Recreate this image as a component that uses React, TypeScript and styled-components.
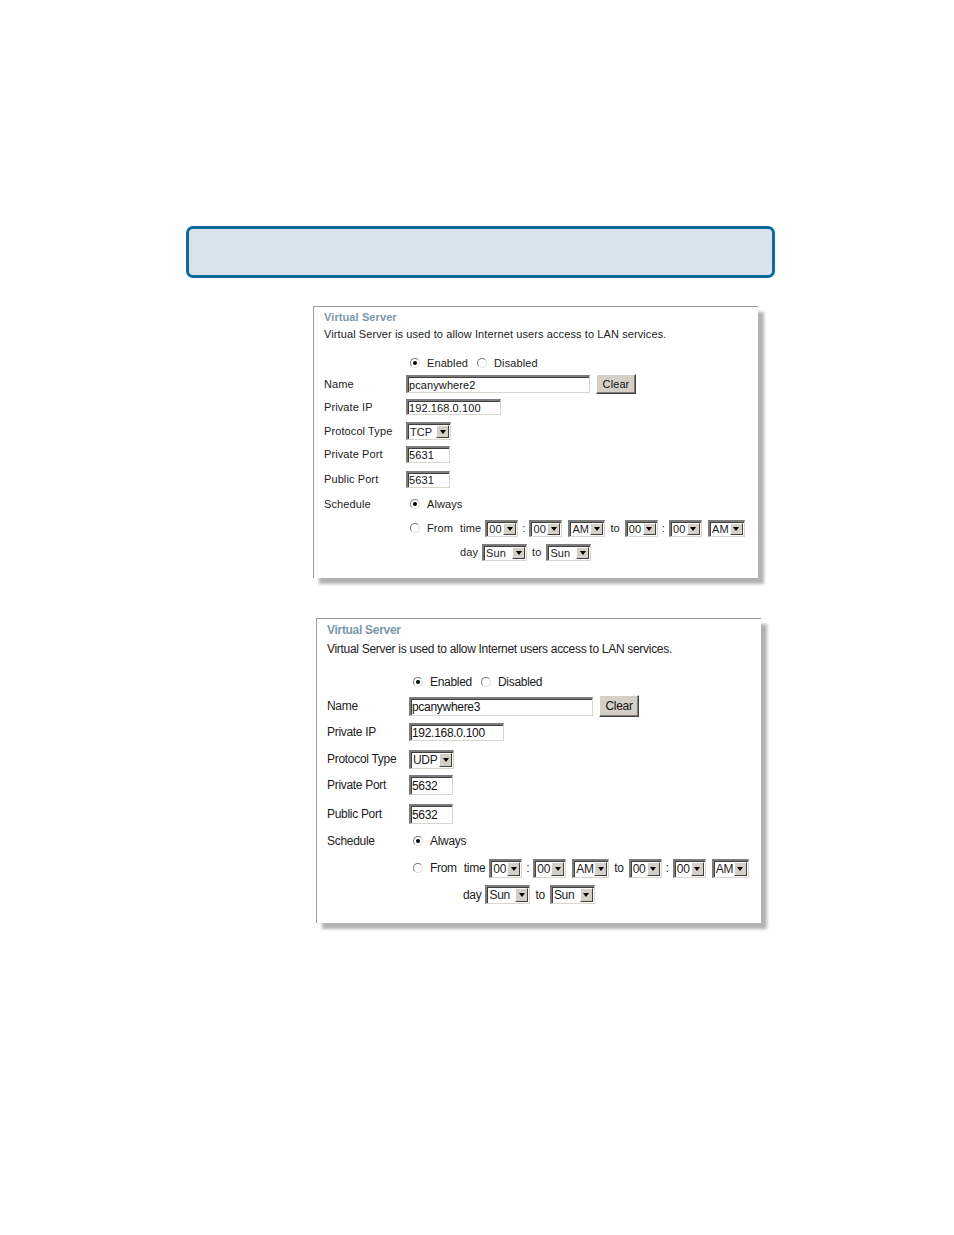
import React from "react";
import styled, { createGlobalStyle } from "styled-components";

const GlobalStyle = createGlobalStyle`
  html, body {
    margin: 0;
    padding: 0;
    background: #ffffff;
  }
  body {
    font-family: "Liberation Sans", Arial, sans-serif;
    color: #1c1c1c;
  }
`;

type Sizes = {
  font: number;
  spacing: number;
  field: number;
  name: number;
  ip: number;
  port: number;
  btn: number;
  rows: {
    title: number;
    desc: number;
    radioGap: number;
    radio: number;
    name: number;
    ip: number;
    proto: number;
    priv: number;
    pub: number;
    sched: number;
    from: number;
    day: number;
    bottom: number;
  };
};

const small: Sizes = {
  font: 11,
  spacing: 0.1,
  field: 17,
  name: 18,
  ip: 16,
  port: 17,
  btn: 20,
  rows: {
    title: 19,
    desc: 16,
    radioGap: 10,
    radio: 22,
    name: 20,
    ip: 26,
    proto: 22,
    priv: 24,
    pub: 26,
    sched: 24,
    from: 24,
    day: 24,
    bottom: 14,
  },
};

const tall: Sizes = {
  font: 12,
  spacing: -0.3,
  field: 19,
  name: 19,
  ip: 18,
  port: 20,
  btn: 22,
  rows: {
    title: 21,
    desc: 17,
    radioGap: 14,
    radio: 22,
    name: 26,
    ip: 26,
    proto: 28,
    priv: 24,
    pub: 34,
    sched: 20,
    from: 34,
    day: 18,
    bottom: 20,
  },
};

const Page = styled.div`
  width: 954px;
  min-height: 1235px;
  padding-top: 226px;
  box-sizing: border-box;
  display: flex;
  flex-direction: column;
`;

const Banner = styled.div`
  margin-left: 186px;
  width: 589px;
  height: 52px;
  box-sizing: border-box;
  border: 3px solid #0b6a9e;
  border-radius: 7px;
  background: #d9e3ee;
`;

const Panel = styled.div<{ $ml: number; $mt: number; $font: number; $ls: number }>`
  margin-left: ${(p) => p.$ml}px;
  margin-top: ${(p) => p.$mt}px;
  width: 445px;
  box-sizing: border-box;
  background: #ffffff;
  border-top: 1px solid #9c9c9c;
  border-left: 1px solid #9c9c9c;
  box-shadow: 6px 6px 3px rgba(0, 0, 0, 0.3);
  padding-left: 10px;
  display: flex;
  flex-direction: column;
  font-size: ${(p) => p.$font}px;
  letter-spacing: ${(p) => p.$ls}px;
`;

const Title = styled.div<{ $h: number }>`
  height: ${(p) => p.$h}px;
  display: flex;
  align-items: center;
  font-weight: bold;
  color: #7b99ab;
`;

const Desc = styled.div<{ $h: number }>`
  height: ${(p) => p.$h}px;
  display: flex;
  align-items: center;
  white-space: nowrap;
`;

const Row = styled.div<{ $h: number; $mt?: number }>`
  height: ${(p) => p.$h}px;
  margin-top: ${(p) => p.$mt ?? 0}px;
  display: grid;
  grid-template-columns: 82px 1fr;
  align-items: center;
`;

const Label = styled.span`
  white-space: nowrap;
`;

const Controls = styled.div<{ $indent?: number }>`
  display: flex;
  align-items: center;
  gap: 5px;
  padding-left: ${(p) => p.$indent ?? 0}px;
  white-space: nowrap;
`;

const TextBox = styled.input<{ $w: number; $h: number }>`
  width: ${(p) => p.$w}px;
  height: ${(p) => p.$h}px;
  box-sizing: border-box;
  margin: 0;
  padding: 0 1px;
  font: inherit;
  letter-spacing: inherit;
  color: #111;
  background: #fff;
  border-top: 2px solid #7c7c7c;
  border-left: 2px solid #7c7c7c;
  border-right: 1px solid #d8d5cd;
  border-bottom: 1px solid #d8d5cd;
  box-shadow: inset 1px 1px 0 #404040;
  outline: none;
`;

const Button = styled.button<{ $h: number }>`
  height: ${(p) => p.$h}px;
  width: 40px;
  margin: 0 0 0 1px;
  padding: 0;
  font: inherit;
  letter-spacing: inherit;
  color: #111;
  background: #d4d0c8;
  border-top: 1px solid #ffffff;
  border-left: 1px solid #ffffff;
  border-right: 1px solid #404040;
  border-bottom: 1px solid #404040;
  box-shadow: inset -1px -1px 0 #808080;
`;

const SelectBox = styled.div<{ $w: number; $h: number; $ml?: number }>`
  width: ${(p) => p.$w}px;
  height: ${(p) => p.$h}px;
  margin-left: ${(p) => p.$ml ?? 0}px;
  box-sizing: border-box;
  display: flex;
  align-items: stretch;
  background: #fff;
  border-top: 2px solid #7c7c7c;
  border-left: 2px solid #7c7c7c;
  border-right: 1px solid #d8d5cd;
  border-bottom: 1px solid #d8d5cd;
  box-shadow: inset 1px 1px 0 #404040;
`;

const SelectText = styled.span`
  flex: 1;
  display: flex;
  align-items: center;
  padding-left: 2px;
  overflow: hidden;
`;

const DropButton = styled.span`
  width: 13px;
  margin: 1px 1px 1px 0;
  box-sizing: border-box;
  display: flex;
  align-items: center;
  justify-content: center;
  background: #d4d0c8;
  border-top: 1px solid #ffffff;
  border-left: 1px solid #ffffff;
  border-right: 1px solid #404040;
  border-bottom: 1px solid #404040;
`;

const Arrow = styled.span`
  width: 0;
  height: 0;
  border-left: 3.5px solid transparent;
  border-right: 3.5px solid transparent;
  border-top: 4px solid #000;
`;

const RadioDot = styled.span<{ $on: boolean }>`
  width: 10px;
  height: 10px;
  box-sizing: border-box;
  border-radius: 50%;
  background: #fff;
  border: 1px solid;
  border-color: #7c7c7c #e0ddd6 #e0ddd6 #7c7c7c;
  display: flex;
  align-items: center;
  justify-content: center;
  margin-left: 4px;
  &::after {
    content: "";
    width: 4px;
    height: 4px;
    border-radius: 50%;
    background: ${(p) => (p.$on ? "#000" : "transparent")};
  }
`;

const Word = styled.span<{ $ml?: number; $mr?: number }>`
  margin-left: ${(p) => p.$ml ?? 0}px;
  margin-right: ${(p) => p.$mr ?? 0}px;
`;

const Select: React.FC<{ w: number; h: number; value: string; ml?: number }> = ({ w, h, value, ml }) => (
  <SelectBox $w={w} $h={h} $ml={ml}>
    <SelectText>{value}</SelectText>
    <DropButton>
      <Arrow />
    </DropButton>
  </SelectBox>
);

type ServerProps = {
  s: Sizes;
  ml: number;
  mt: number;
  name: string;
  protocol: string;
  port: string;
};

const VirtualServer: React.FC<ServerProps> = ({ s, ml, mt, name, protocol, port }) => {
  const r = s.rows;
  return (
    <Panel $ml={ml} $mt={mt} $font={s.font} $ls={s.spacing}>
      <Title $h={r.title}>Virtual Server</Title>
      <Desc $h={r.desc}>Virtual Server is used to allow Internet users access to LAN services.</Desc>

      <Row $h={r.radio} $mt={r.radioGap}>
        <span />
        <Controls>
          <RadioDot $on />
          <Word $ml={2}>Enabled</Word>
          <RadioDot $on={false} />
          <Word $ml={2}>Disabled</Word>
        </Controls>
      </Row>

      <Row $h={r.name}>
        <Label>Name</Label>
        <Controls>
          <TextBox $w={184} $h={s.name} readOnly value={name} />
          <Button $h={s.btn}>Clear</Button>
        </Controls>
      </Row>

      <Row $h={r.ip}>
        <Label>Private IP</Label>
        <Controls>
          <TextBox $w={95} $h={s.ip} readOnly value="192.168.0.100" />
        </Controls>
      </Row>

      <Row $h={r.proto}>
        <Label>Protocol Type</Label>
        <Controls>
          <Select w={45} h={s.name} value={protocol} />
        </Controls>
      </Row>

      <Row $h={r.priv}>
        <Label>Private Port</Label>
        <Controls>
          <TextBox $w={44} $h={s.port} readOnly value={port} />
        </Controls>
      </Row>

      <Row $h={r.pub}>
        <Label>Public Port</Label>
        <Controls>
          <TextBox $w={44} $h={s.port} readOnly value={port} />
        </Controls>
      </Row>

      <Row $h={r.sched}>
        <Label>Schedule</Label>
        <Controls>
          <RadioDot $on />
          <Word $ml={2}>Always</Word>
        </Controls>
      </Row>

      <Row $h={r.from}>
        <span />
        <Controls>
          <RadioDot $on={false} />
          <Word $ml={2} $mr={2}>From</Word>
          <Word $mr={-1}>time</Word>
          <Select w={33} h={s.field} value="00" />
          <Word $ml={-1} $mr={-1}>:</Word>
          <Select w={33} h={s.field} value="00" />
          <Select w={37} h={s.field} value="AM" ml={1} />
          <Word>to</Word>
          <Select w={33} h={s.field} value="00" />
          <Word $ml={-1} $mr={-1}>:</Word>
          <Select w={33} h={s.field} value="00" />
          <Select w={37} h={s.field} value="AM" ml={1} />
        </Controls>
      </Row>

      <Row $h={r.day}>
        <span />
        <Controls $indent={54}>
          <Word $mr={-1}>day</Word>
          <Select w={45} h={s.field} value="Sun" />
          <Word>to</Word>
          <Select w={45} h={s.field} value="Sun" />
        </Controls>
      </Row>

      <Row $h={r.bottom}>
        <span />
        <span />
      </Row>
    </Panel>
  );
};

const App: React.FC = () => (
  <>
    <GlobalStyle />
    <Page>
      <Banner />
      <VirtualServer s={small} ml={313} mt={28} name="pcanywhere2" protocol="TCP" port="5631" />
      <VirtualServer s={tall} ml={316} mt={40} name="pcanywhere3" protocol="UDP" port="5632" />
    </Page>
  </>
);

export default App;
